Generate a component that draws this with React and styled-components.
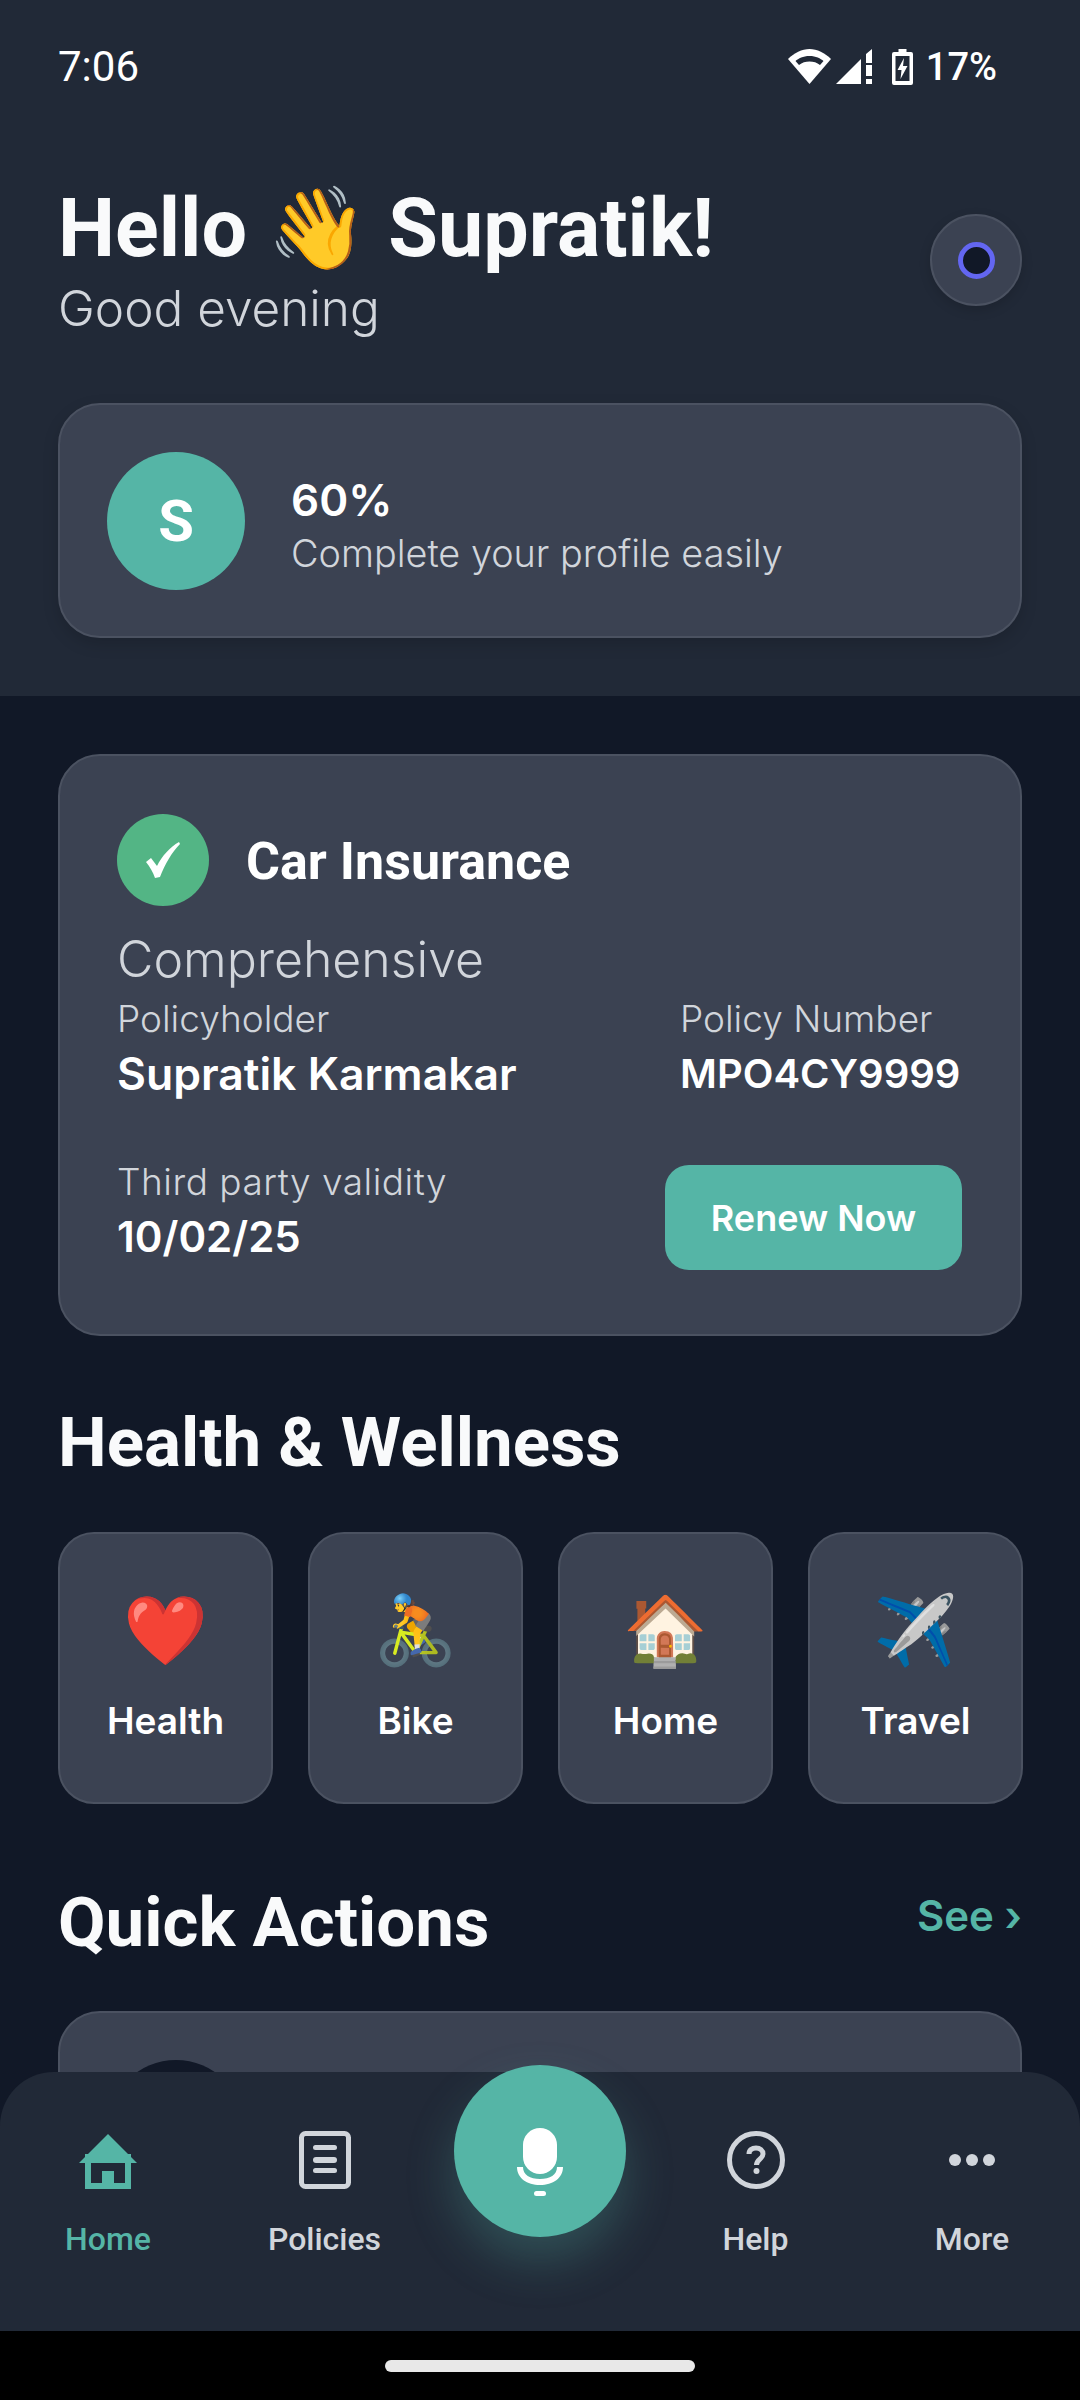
import React from 'react'
import styled, { createGlobalStyle } from 'styled-components'

const GlobalStyle = createGlobalStyle`
  html, body {
    margin: 0;
    padding: 0;
    background: #111827;
  }
  * {
    box-sizing: border-box;
  }
`

const BODY_FONT = `Inter, "Noto Sans", sans-serif`
const HEAD_FONT = `Roboto, "Liberation Sans", sans-serif`

const services = [
  { icon: '❤️', label: 'Health' },
  { icon: '🚴', label: 'Bike' },
  { icon: '🏠', label: 'Home' },
  { icon: '✈️', label: 'Travel' },
]

function WifiIcon() {
  return (
    <svg width="43" height="35" viewBox="0 0 43 35">
      <path d="M21.500 35 L0 10 C6 4 14 0 21.500 0 C29 0 37 4 43 10 Z" fill="#fff" />
      <path d="M21.500 7 C15 7 10.500 9.500 7.500 12 L11 16 C14 13.500 17.500 12.500 21.500 12.500 C25.500 12.500 29 13.500 32 16 L35.500 12 C32.500 9.500 28 7 21.500 7 Z" fill="#212937" />
    </svg>
  )
}

function SignalIcon() {
  return (
    <svg width="51" height="35" viewBox="0 0 51 35">
      <path d="M0 35 L25 10 V35 Z" fill="#fff" />
      <path d="M30 5 L36 0 V14 H30 Z M30 16 H36 V27 H30 Z M30 30 H36 V35 H30 Z" fill="#fff" />
    </svg>
  )
}

function BatteryIcon() {
  return (
    <svg width="21" height="36" viewBox="0 0 21 36">
      <path d="M6.500 0 H14.500 V3 H19 Q21 3 21 5 V34 Q21 36 19 36 H2 Q0 36 0 34 V5 Q0 3 2 3 H6.500 Z" fill="#fff" />
      <path d="M3.500 7 H17.500 V32 H3.500 Z" fill="#212937" />
      <path d="M12 9 L5.500 21 H9.500 L8.500 30 L15.500 17 H11 Z" fill="#fff" />
    </svg>
  )
}

function CheckIcon() {
  return (
    <svg width="34" height="36" viewBox="0 0 34 36" fill="#fff">
      <path d="M0 20 L5 16 L11 24 C16 14 24 5 33 0 L34 2 C26 10 19 22 14 35 L9 36 C7 30 4 25 0 20 Z" />
    </svg>
  )
}

function HomeIcon() {
  return (
    <svg width="58" height="58" viewBox="0 0 58 58">
      <path d="M29 3 L58 32 H0 Z" fill="#55b5a6" />
      <path d="M6 23 H12 V30 H6 Z M46 23 H52 V30 H46 Z" fill="#55b5a6" />
      <path d="M6 32 H52 V58 H6 Z" fill="#55b5a6" />
      <path d="M12 32 H46 V52 H12 Z" fill="#212937" />
      <path d="M23 40 H35 V52 H23 Z" fill="#55b5a6" />
    </svg>
  )
}

function PolicyIcon() {
  return (
    <svg width="52" height="58" viewBox="0 0 52 58">
      <rect x="2.500" y="2.500" width="47" height="53" rx="4" fill="none" stroke="#d1d5db" strokeWidth="5" />
      <rect x="14" y="14" width="24" height="5" rx="2.500" fill="#d1d5db" />
      <rect x="14" y="26" width="24" height="6" rx="3" fill="#d1d5db" />
      <rect x="14" y="37" width="24" height="5" rx="2.500" fill="#d1d5db" />
    </svg>
  )
}

function HelpIcon() {
  return (
    <svg width="58" height="58" viewBox="0 0 58 58" fill="none">
      <circle cx="29" cy="29" r="26.500" stroke="#d1d5db" strokeWidth="5" />
      <path d="M22 23 C22 19 25 17 29 17 C33 17 36 19.500 36 23 C36 28 29.500 28.500 29.500 34" stroke="#d1d5db" strokeWidth="5" />
      <circle cx="29.500" cy="40" r="3" fill="#d1d5db" />
    </svg>
  )
}

function DotsIcon() {
  return (
    <svg width="46" height="12" viewBox="0 0 46 12" fill="#d1d5db">
      <circle cx="6" cy="6" r="6" />
      <circle cx="23" cy="6" r="6" />
      <circle cx="40" cy="6" r="6" />
    </svg>
  )
}

function MicIcon() {
  return (
    <svg width="46" height="68" viewBox="0 0 46 68" fill="#fff">
      <rect x="6" y="0" width="34" height="46" rx="17" />
      <path d="M0 39 H6 C6 47 13 51 23 51 C33 51 40 47 40 39 H46 C46 50 36 57 23 57 C10 57 0 50 0 39 Z" />
      <rect x="17" y="63" width="12" height="5" rx="2.500" />
    </svg>
  )
}

export default function App() {
  return (
    <Screen>
      <GlobalStyle />
      <Header>
        <StatusBar>
          <Clock>7:06</Clock>
          <StatusIcons>
            <WifiIcon />
            <SignalIcon />
            <BatteryIcon />
            <BatteryText>17%</BatteryText>
          </StatusIcons>
        </StatusBar>

        <Greeting>
          <div>
            <Hello>Hello <span>👋</span> Supratik!</Hello>
            <Evening>Good evening</Evening>
          </div>
          <RoundButton><Ring /></RoundButton>
        </Greeting>

        <ProfileCard>
          <Avatar>S</Avatar>
          <ProfileText>
            <Percent>60%</Percent>
            <ProfileHint>Complete your profile easily</ProfileHint>
          </ProfileText>
        </ProfileCard>
      </Header>

      <Main>
        <PolicyCard>
          <PolicyTop>
            <CheckBadge><CheckIcon /></CheckBadge>
            <PolicyTitle>Car Insurance</PolicyTitle>
          </PolicyTop>
          <PlanName>Comprehensive</PlanName>
          <PolicyRow>
            <div>
              <FieldLabel>Policyholder</FieldLabel>
              <FieldValue $size={44.5}>Supratik Karmakar</FieldValue>
            </div>
            <NumberField>
              <FieldLabel>Policy Number</FieldLabel>
              <FieldValue $size={40}>MPO4CY9999</FieldValue>
            </NumberField>
          </PolicyRow>
          <ValidityRow>
            <div>
              <ValidityLabel>Third party validity</ValidityLabel>
              <FieldValue $size={42}>10/02/25</FieldValue>
            </div>
            <RenewButton>Renew Now</RenewButton>
          </ValidityRow>
        </PolicyCard>

        <SectionTitle>Health &amp; Wellness</SectionTitle>
        <ServiceGrid>
          {services.map((s) => (
            <ServiceTile key={s.label}>
              <ServiceIcon>{s.icon}</ServiceIcon>
              <ServiceLabel>{s.label}</ServiceLabel>
            </ServiceTile>
          ))}
        </ServiceGrid>

        <ActionsHead>
          <SectionTitle>Quick Actions</SectionTitle>
          <SeeLink>See ›</SeeLink>
        </ActionsHead>
        <ActionCard>
          <ActionCircle />
        </ActionCard>
      </Main>

      <BottomNav>
        <NavItem $active>
          <NavIconBox><HomeIcon /></NavIconBox>
          Home
        </NavItem>
        <NavItem>
          <NavIconBox><PolicyIcon /></NavIconBox>
          Policies
        </NavItem>
        <NavGap />
        <NavItem>
          <NavIconBox><HelpIcon /></NavIconBox>
          Help
        </NavItem>
        <NavItem>
          <NavIconBox><DotsIcon /></NavIconBox>
          More
        </NavItem>
        <MicButton><MicIcon /></MicButton>
      </BottomNav>

      <GestureBar>
        <Handle />
      </GestureBar>
    </Screen>
  )
}

const Screen = styled.div`
  position: relative;
  width: 1080px;
  height: 2400px;
  overflow: hidden;
  background: #111827;
  font-family: ${BODY_FONT};
  color: #fff;
`

const Header = styled.div`
  height: 696px;
  padding: 0 58px;
  background: #212937;
`

const StatusBar = styled.div`
  display: flex;
  justify-content: space-between;
  align-items: center;
  height: 130px;
  padding: 3px 25px 0 0;
`

const Clock = styled.div`
  font-family: ${HEAD_FONT};
  font-size: 42px;
  font-weight: 400;
`

const StatusIcons = styled.div`
  display: flex;
  align-items: center;
  gap: 5px;
`

const BatteryText = styled.div`
  font-family: ${HEAD_FONT};
  font-size: 38px;
  font-weight: 500;
  margin-left: 8px;
`

const Greeting = styled.div`
  display: flex;
  justify-content: space-between;
  align-items: flex-start;
  height: 273px;
  padding-top: 52px;
`

const Hello = styled.div`
  font-family: ${HEAD_FONT};
  font-size: 80.8px;
  font-weight: 700;
  line-height: 94px;
  color: #f9fafb;
`

const Evening = styled.div`
  margin-top: -4px;
  font-size: 49.5px;
  font-weight: 300;
  line-height: 72px;
  color: #d1d5db;
`

const RoundButton = styled.div`
  display: flex;
  align-items: center;
  justify-content: center;
  width: 92px;
  height: 92px;
  margin-top: 32px;
  border-radius: 50%;
  background: #3b4252;
  border: 2px solid #4b5261;
  box-shadow: 0 4px 12px rgba(0, 0, 0, 0.15);
`

const Ring = styled.div`
  width: 37px;
  height: 37px;
  border-radius: 50%;
  background: #111827;
  border: 5px solid #6366f1;
`

const ProfileCard = styled.div`
  display: flex;
  align-items: center;
  gap: 46px;
  height: 235px;
  padding-left: 47px;
  border-radius: 42px;
  background: #3b4252;
  border: 2px solid #4b5261;
  box-shadow: 0 6px 16px rgba(0, 0, 0, 0.15);
`

const Avatar = styled.div`
  display: flex;
  align-items: center;
  justify-content: center;
  width: 138px;
  height: 138px;
  border-radius: 50%;
  background: #55b5a6;
  font-family: ${HEAD_FONT};
  font-size: 58px;
  font-weight: 700;
`

const ProfileText = styled.div`
  margin-top: 8px;
`

const Percent = styled.div`
  font-size: 44px;
  font-weight: 600;
  line-height: 56px;
`

const ProfileHint = styled.div`
  font-size: 37.8px;
  font-weight: 300;
  line-height: 50px;
  color: #d1d5db;
`

const Main = styled.div`
  padding: 58px 58px 0;
`

const PolicyCard = styled.div`
  height: 582px;
  margin-bottom: 67px;
  padding: 58px 58px 0 57px;
  border-radius: 42px;
  background: #3b4252;
  border: 2px solid #4b5261;
`

const PolicyTop = styled.div`
  display: flex;
  align-items: center;
  gap: 37px;
`

const CheckBadge = styled.div`
  display: flex;
  align-items: center;
  justify-content: center;
  width: 92px;
  height: 92px;
  border-radius: 50%;
  background: #53b585;
`

const PolicyTitle = styled.div`
  font-family: ${HEAD_FONT};
  font-size: 52px;
  font-weight: 700;
  margin-top: 3px;
`

const PlanName = styled.div`
  margin-top: 21px;
  font-size: 50px;
  font-weight: 300;
  line-height: 64px;
  color: #d1d5db;
`

const PolicyRow = styled.div`
  display: flex;
  justify-content: space-between;
  margin-top: 3px;
`

const NumberField = styled.div`
  width: 282px;
`

const FieldLabel = styled.div`
  font-size: 37px;
  font-weight: 300;
  line-height: 50px;
  color: #d1d5db;
`

const ValidityLabel = styled(FieldLabel)`
  letter-spacing: 0.5px;
`

const FieldValue = styled.div`
  font-size: ${(p) => p.$size}px;
  font-weight: 600;
  line-height: 60px;
  white-space: nowrap;
`

const ValidityRow = styled.div`
  display: flex;
  justify-content: space-between;
  align-items: center;
  margin-top: 49px;
`

const RenewButton = styled.div`
  display: flex;
  align-items: center;
  justify-content: center;
  width: 297px;
  height: 105px;
  margin-top: 12px;
  border-radius: 24px;
  background: #55b5a6;
  font-size: 36px;
  font-weight: 600;
`

const SectionTitle = styled.div`
  font-family: ${HEAD_FONT};
  font-size: 69px;
  font-weight: 700;
  line-height: 80px;
  color: #f9fafb;
`

const ServiceGrid = styled.div`
  display: grid;
  grid-template-columns: repeat(4, 215px);
  gap: 35px;
  margin-top: 49px;
`

const ServiceTile = styled.div`
  display: flex;
  flex-direction: column;
  align-items: center;
  height: 272px;
  padding-top: 51px;
  border-radius: 36px;
  background: #3b4252;
  border: 2px solid #4b5261;
`

const ServiceIcon = styled.div`
  height: 88px;
  font-size: 68px;
  line-height: 88px;
`

const ServiceLabel = styled.div`
  margin-top: 24px;
  font-size: 37px;
  font-weight: 600;
  line-height: 48px;
`

const ActionsHead = styled.div`
  display: flex;
  justify-content: space-between;
  align-items: center;
  margin-top: 79px;
`

const SeeLink = styled.div`
  margin-bottom: 16px;
  font-size: 42px;
  font-weight: 600;
  color: #55b5a6;
`

const ActionCard = styled.div`
  height: 200px;
  margin-top: 48px;
  padding: 47px 0 0 47px;
  border-radius: 42px 42px 0 0;
  background: #3b4252;
  border: 2px solid #4b5261;
`

const ActionCircle = styled.div`
  width: 138px;
  height: 138px;
  border-radius: 50%;
  background: #111827;
`

const BottomNav = styled.div`
  position: absolute;
  left: 0;
  right: 0;
  top: 2072px;
  height: 259px;
  display: grid;
  grid-template-columns: 216px 217px 214px 217px 216px;
  padding-top: 59px;
  border-radius: 54px 54px 0 0;
  background: #212937;
`

const NavGap = styled.div``

const NavItem = styled.div`
  display: flex;
  flex-direction: column;
  align-items: center;
  height: 131px;
  font-family: ${HEAD_FONT};
  font-size: 32px;
  font-weight: 500;
  line-height: 44px;
  color: ${(p) => (p.$active ? '#55b5a6' : '#d1d5db')};
`

const NavIconBox = styled.div`
  display: flex;
  align-items: center;
  justify-content: center;
  height: 58px;
  margin-bottom: 28px;
`

const MicButton = styled.div`
  position: absolute;
  left: 454px;
  top: -7px;
  display: flex;
  justify-content: center;
  width: 172px;
  height: 172px;
  padding-top: 63px;
  border-radius: 50%;
  background: #55b5a6;
  box-shadow: 0 24px 48px rgba(85, 181, 166, 0.28);
`

const GestureBar = styled.div`
  position: absolute;
  left: 0;
  right: 0;
  bottom: 0;
  height: 69px;
  background: #000;
  display: flex;
  justify-content: center;
  padding-top: 29px;
`

const Handle = styled.div`
  width: 310px;
  height: 12px;
  border-radius: 6px;
  background: #e8e8e8;
`
